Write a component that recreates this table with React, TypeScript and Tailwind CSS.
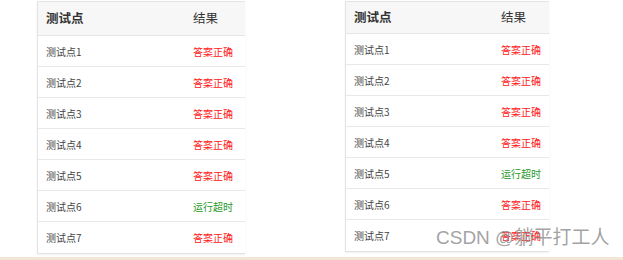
const leftRows = [
  { name: '测试点1', ok: true },
  { name: '测试点2', ok: true },
  { name: '测试点3', ok: true },
  { name: '测试点4', ok: true },
  { name: '测试点5', ok: true },
  { name: '测试点6', ok: false },
  { name: '测试点7', ok: true },
];

const rightRows = [
  { name: '测试点1', ok: true },
  { name: '测试点2', ok: true },
  { name: '测试点3', ok: true },
  { name: '测试点4', ok: true },
  { name: '测试点5', ok: false },
  { name: '测试点6', ok: true },
  { name: '测试点7', ok: true },
];

function ResultTable({ rows, width, headH }: { rows: { name: string; ok: boolean }[]; width: string; headH: string }) {
  return (
    <div className={`${width} border-l border-t border-b border-[#e3e3e3] bg-white shadow-[0_1px_2px_rgba(0,0,0,0.06)]`}>
      <div className={`flex items-center ${headH} bg-[#f7f7f7] border-b border-[#e6e6e6] text-[12.5px] font-bold text-[#333]`}>
        <span className="pl-[8px] w-[155px]">测试点</span>
        <span className="font-normal">结果</span>
      </div>
      {rows.map((r, i) => (
        <div
          key={r.name}
          className={`flex items-center h-[31px] text-[10px] ${i < rows.length - 1 ? 'border-b border-[#e8e8e8]' : ''}`}
        >
          <span className="pl-[8px] w-[155px] text-[#444]">{r.name}</span>
          <span className={r.ok ? 'text-[#ff2020]' : 'text-[#2a9a2a]'}>{r.ok ? '答案正确' : '运行超时'}</span>
        </div>
      ))}
    </div>
  );
}

export default function App() {
  return (
    <div
      className="relative w-[623px] h-[260px] bg-white overflow-hidden flex flex-col"
      style={{ fontFamily: '"Noto Sans CJK SC", "Liberation Sans", sans-serif' }}
    >
      <div className="flex-1 flex items-start pt-[1px]">
        <div className="ml-[37px]">
          <ResultTable rows={leftRows} width="w-[208px]" headH="h-[34px]" />
        </div>
        <div className="ml-[100px]">
          <ResultTable rows={rightRows} width="w-[204px]" headH="h-[32px]" />
        </div>
      </div>
      <div className="h-[3px] bg-[#efe6d6]" />
      <div
        className="absolute left-[436px] top-[228px] text-[19px] leading-none text-[#8a8a8a]/80 whitespace-nowrap"
        style={{ fontFamily: '"Liberation Sans", "Noto Sans CJK SC", sans-serif' }}
      >
        CSDN @躺平打工人
      </div>
    </div>
  );
}
